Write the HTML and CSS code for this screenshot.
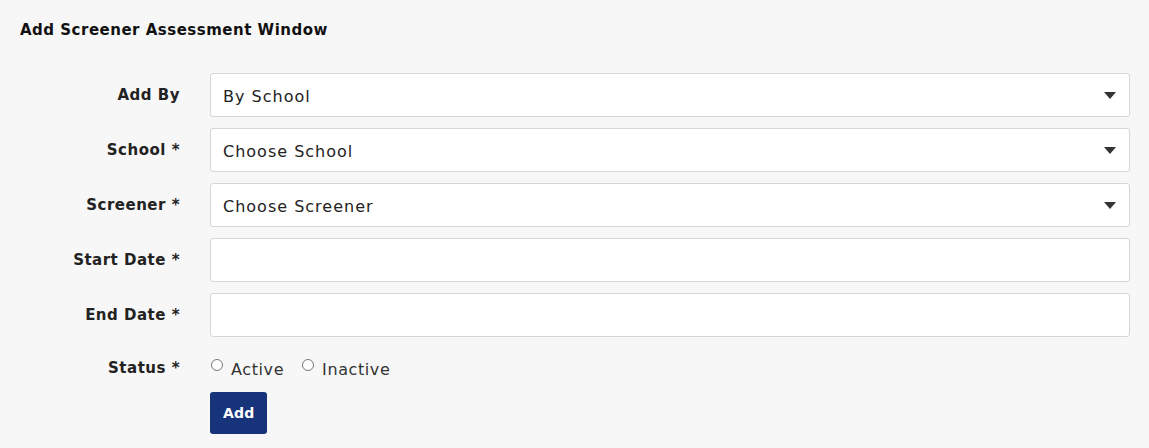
FILE: index.html
```html
<!DOCTYPE html>
<html lang="en">
<head>
    <meta charset="UTF-8">
    <meta name="viewport" content="width=device-width, initial-scale=1.0">
    <title>Add Screener Assessment Window</title>
    <link rel="stylesheet" href="styles.css">
</head>
<body>

    <div class="panel">
        <h4 class="panel-title">Add Screener Assessment Window</h4>

        <form class="form" onsubmit="return false;">
            <div class="row">
                <label class="label" for="addBy">Add By</label>
                <div class="select-wrap">
                    <select id="addBy" class="field">
                        <option>By School</option>
                        <option>By District</option>
                    </select>
                </div>
            </div>
            <div class="row">
                <label class="label" for="school">School *</label>
                <div class="select-wrap">
                    <select id="school" class="field">
                        <option>Choose School</option>
                    </select>
                </div>
            </div>
            <div class="row">
                <label class="label" for="screener">Screener *</label>
                <div class="select-wrap">
                    <select id="screener" class="field">
                        <option>Choose Screener</option>
                    </select>
                </div>
            </div>
            <div class="row">
                <label class="label" for="startDate">Start Date *</label>
                <input type="text" id="startDate" class="field">
            </div>
            <div class="row">
                <label class="label" for="endDate">End Date *</label>
                <input type="text" id="endDate" class="field">
            </div>
            <div class="row row-radio">
                <span class="label">Status *</span>
                <div class="radios">
                    <label class="radio"><input type="radio" name="status"> Active</label>
                    <label class="radio"><input type="radio" name="status"> Inactive</label>
                </div>
            </div>
            <div class="row row-action">
                <span class="label"></span>
                <button class="btn">Add</button>
            </div>
        </form>
    </div>

</body>
</html>
```

FILE: styles.css
```css
body {
    margin: 0;
    background: #f7f7f7;
    font-family: "DejaVu Sans", Arial, sans-serif;
    color: #212529;
}
.panel {
    padding: 21px 19px 0 20px;
}
.panel-title {
    margin: 0 0 34px;
    font-size: 15px;
    font-weight: 700;
    letter-spacing: 0.5px;
    color: #111;
}
.form {
    display: flex;
    flex-direction: column;
    gap: 11px;
}
.row {
    display: flex;
    align-items: center;
}
.label {
    width: 160px;
    flex: none;
    text-align: right;
    padding-right: 30px;
    font-size: 15px;
    font-weight: 700;
    letter-spacing: 0.5px;
    color: #222;
    box-sizing: content-box;
}
.select-wrap {
    flex: 1;
    position: relative;
}
.select-wrap::after {
    content: "";
    position: absolute;
    right: 14px;
    top: 19px;
    border-left: 6px solid transparent;
    border-right: 6px solid transparent;
    border-top: 7px solid #333;
    pointer-events: none;
}
.field {
    flex: 1;
    width: 100%;
    height: 44px;
    box-sizing: border-box;
    border: 1px solid #d3d6db;
    border-radius: 3px;
    background: #fff;
    padding: 2px 12px 0;
    font-family: inherit;
    font-size: 16px;
    letter-spacing: 1px;
    color: #222;
    appearance: none;
    -webkit-appearance: none;
    outline: none;
}
.row-radio {
    height: 40px;
    margin-top: -4px;
}
.row-radio .label {
    position: relative;
    top: 4px;
}
.radios {
    display: flex;
    gap: 17px;
}
.radio {
    display: flex;
    align-items: center;
    font-size: 16px;
    letter-spacing: 0.6px;
    color: #333;
    position: relative;
    top: 5px;
}
.radio input {
    margin: 0 8px 0 1px;
    width: 12px;
    height: 12px;
    position: relative;
    top: -4px;
}
.row-action {
    margin-top: -3px;
}
.btn {
    background: #17347a;
    color: #fff;
    border: none;
    border-radius: 3px;
    padding: 0 13px;
    height: 42px;
    font-family: inherit;
    font-size: 14px;
    font-weight: 600;
    letter-spacing: 0.2px;
    cursor: pointer;
}
```
